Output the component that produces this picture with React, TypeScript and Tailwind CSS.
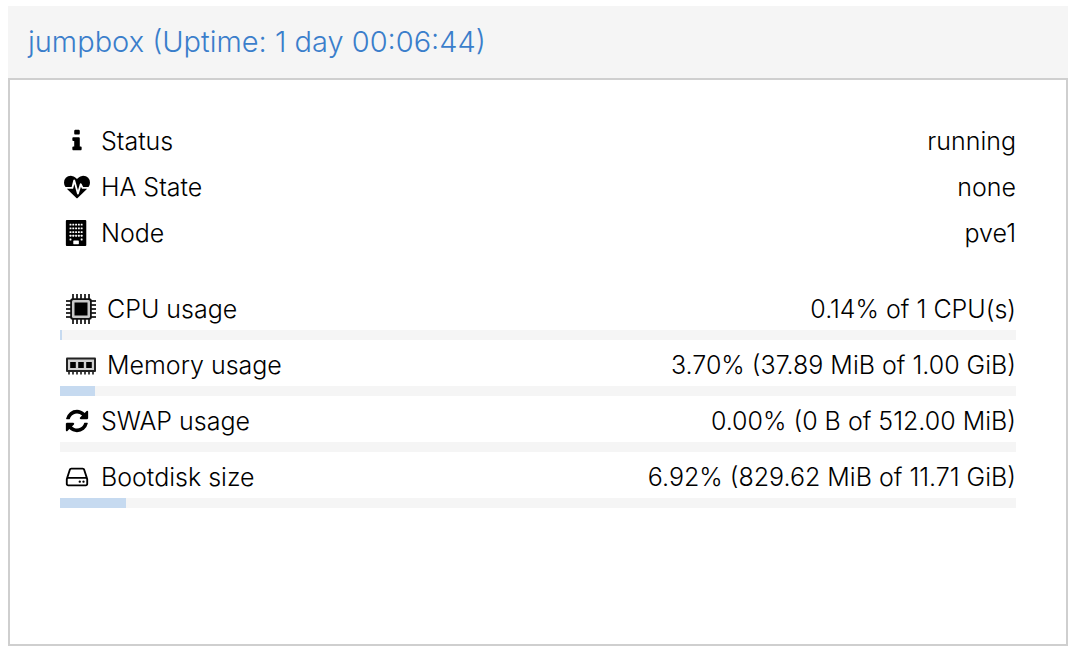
import type { ReactNode } from "react";

function Glyph({ d }: { d: string }) {
  return (
    <svg viewBox="0 0 1792 1792" className="size-[26px]" fill="currentColor" aria-hidden="true">
      <path d={d} />
    </svg>
  );
}

const INFO =
  "M1216 1344v128q0 26-19 45t-45 19h-512q-26 0-45-19t-19-45v-128q0-26 19-45t45-19h64v-384h-64q-26 0-45-19t-19-45v-128q0-26 19-45t45-19h384q26 0 45 19t19 45v576h64q26 0 45 19t19 45zm-128-1152v192q0 26-19 45t-45 19h-256q-26 0-45-19t-19-45v-192q0-26 19-45t45-19h256q26 0 45 19t19 45z";
const HEARTBEAT =
  "M1280 1024h305q-5 6-10 10.5t-9 7.5l-3 4-623 600q-18 18-44 18t-44-18l-624-602q-5-2-21-20h369q22 0 39.5-13.5t22.5-34.5l70-281 190 667q6 20 23 33t39 13q21 0 38-13t23-33l146-485 56 112q18 35 57 35zm512-428q0 145-103 300h-369l-111-221q-8-17-25.5-27t-36.5-8q-45 5-56 46l-129 430-196-686q-6-20-23.5-33t-39.5-13-39 13.5-22 34.5l-116 464h-423q-103-155-103-300 0-220 127-344t351-124q62 0 126.5 21.5t120 58 95.5 68.5 76 68q36-36 76-68t95.5-68.5 120-58 126.5-21.5q224 0 351 124t127 344z";
const REFRESH =
  "M1639 1056q0 5-1 7-64 268-268 434.5t-478 166.5q-146 0-282.5-55t-243.5-157l-129 129q-19 19-45 19t-45-19-19-45v-448q0-26 19-45t45-19h448q26 0 45 19t19 45-19 45l-137 137q71 66 161 102t187 36q134 0 250-65t186-179q11-17 53-117 8-23 30-23h192q13 0 22.5 9.5t9.5 22.5zm25-800v448q0 26-19 45t-45 19h-448q-26 0-45-19t-19-45 19-45l138-138q-148-137-349-137-134 0-250 65t-186 179q-11 17-53 117-8 23-30 23h-199q-13 0-22.5-9.5t-9.5-22.5v-7q65-268 270-434.5t480-166.5q146 0 284 55.5t245 156.5l130-129q19-19 45-19t45 19 19 45z";
const HDD =
  "M1168 1216q0 33-23.5 56.5t-56.5 23.5-56.5-23.5-23.5-56.5 23.5-56.5 56.5-23.5 56.5 23.5 23.5 56.5zm256 0q0 33-23.5 56.5t-56.5 23.5-56.5-23.5-23.5-56.5 23.5-56.5 56.5-23.5 56.5 23.5 23.5 56.5zm112 160v-320q0-13-9.5-22.5t-22.5-9.5h-1216q-13 0-22.5 9.5t-9.5 22.5v320q0 13 9.5 22.5t22.5 9.5h1216q13 0 22.5-9.5t9.5-22.5zm-1230-480h1180l-157-482q-4-13-16-21.5t-26-8.5h-782q-14 0-26 8.5t-16 21.5zm1358 160v320q0 66-47 113t-113 47h-1216q-66 0-113-47t-47-113v-320q0-25 16-75l197-606q17-53 63-86t101-33h782q55 0 101 33t63 86l197 606q16 50 16 75z";

function BuildingIcon() {
  const cols = [384, 576, 768, 960, 1152];
  const rows = [256, 512, 768, 1024, 1280];
  return (
    <svg viewBox="0 0 1792 1792" className="size-[26px]" aria-hidden="true">
      <rect x="128" y="0" width="1408" height="1792" rx="64" />
      {rows.map((y) =>
        cols
          .filter((x) => y < 1280 || x === 384 || x === 1152)
          .map((x) => <rect key={`${x}-${y}`} x={x} y={y} width="128" height="128" rx="24" fill="white" />),
      )}
      <rect x="640" y="1408" width="384" height="256" rx="32" fill="white" />
    </svg>
  );
}

function CpuIcon() {
  const pins = [7, 11, 15, 19, 23];
  return (
    <svg viewBox="0 0 30 30" className="size-[30px]" aria-hidden="true">
      {pins.map((p) => (
        <path key={p} d={`M${p} 0V30M0 ${p}H30`} stroke="#333" strokeWidth="2" />
      ))}
      <rect x="4.2" y="4.2" width="21.6" height="21.6" rx="2.5" fill="#111" />
      <rect x="6" y="6" width="18" height="18" rx="1.5" fill="#c8c8c8" />
      <rect x="8.5" y="8.5" width="13" height="13" fill="#000" />
    </svg>
  );
}

function MemoryIcon() {
  return (
    <svg viewBox="0 0 30 30" className="size-[30px]" aria-hidden="true">
      <path d="M3 21v3.5M7 21v3.5M11 21v3.5M15 21v3.5M19 21v3.5M23 21v3.5M27 21v3.5" stroke="#444" strokeWidth="2" />
      <rect x="0" y="7.5" width="30" height="14.5" rx="1" fill="#222" />
      <rect x="2" y="9.5" width="26" height="10.5" fill="#d0d0d0" />
      <path d="M4.2 12h5.6v6H4.2zM12.2 12h5.6v6h-5.6zM20.2 12h5.6v6h-5.6z" />
    </svg>
  );
}

type Row = { icon: ReactNode; label: string; value: string; wide?: boolean; used?: number };

const statusRows: Row[] = [
  { icon: <Glyph d={INFO} />, label: "Status", value: "running" },
  { icon: <Glyph d={HEARTBEAT} />, label: "HA State", value: "none" },
  { icon: <BuildingIcon />, label: "Node", value: "pve1" },
];

const usageRows: Row[] = [
  { icon: <CpuIcon />, label: "CPU usage", value: "0.14% of 1 CPU(s)", wide: true, used: 0.14 },
  { icon: <MemoryIcon />, label: "Memory usage", value: "3.70% (37.89 MiB of 1.00 GiB)", wide: true, used: 3.7 },
  { icon: <Glyph d={REFRESH} />, label: "SWAP usage", value: "0.00% (0 B of 512.00 MiB)", used: 0 },
  { icon: <Glyph d={HDD} />, label: "Bootdisk size", value: "6.92% (829.62 MiB of 11.71 GiB)", used: 6.92 },
];

function RowLine({ icon, label, value, wide, used }: Row) {
  return (
    <div className={`flex items-center justify-between ${used === undefined ? "h-[46px]" : "h-[42px]"}`}>
      <div className="flex items-center">
        <span className={wide ? "w-[47px] shrink-0 pl-1.5" : "w-[41px] shrink-0 pl-1"}>{icon}</span>
        <span className="pt-0.5">{label}</span>
      </div>
      <span className="pt-0.5">{value}</span>
    </div>
  );
}

export default function App() {
  return (
    <main className="flex min-h-screen flex-col bg-white pt-1.5 pr-4 pb-0.5 pl-2 font-['Inter','Liberation_Sans',sans-serif] font-light text-black">
      <header className="flex h-[72px] items-center bg-[#f5f5f5] px-5">
        <h1 className="text-[29px] text-[#3a7ecb]">jumpbox (Uptime: 1 day 00:06:44)</h1>
      </header>
      <section className="flex-1 border-2 border-[#cfcfcf] px-[50px] pt-[38px] pb-12 text-[25px]">
        {statusRows.map((row) => (
          <RowLine key={row.label} {...row} />
        ))}
        <div className="flex flex-col gap-1 pt-8">
          {usageRows.map((row) => (
            <div key={row.label}>
              <RowLine {...row} />
              <div
                role="progressbar"
                aria-label={row.label}
                aria-valuenow={row.used}
                className="h-2.5 bg-[#f5f5f5]"
              >
                <div
                  className="h-full bg-[#c6daf0]"
                  style={{ width: row.used ? `max(2px, ${row.used}%)` : 0 }}
                />
              </div>
            </div>
          ))}
        </div>
      </section>
    </main>
  );
}
